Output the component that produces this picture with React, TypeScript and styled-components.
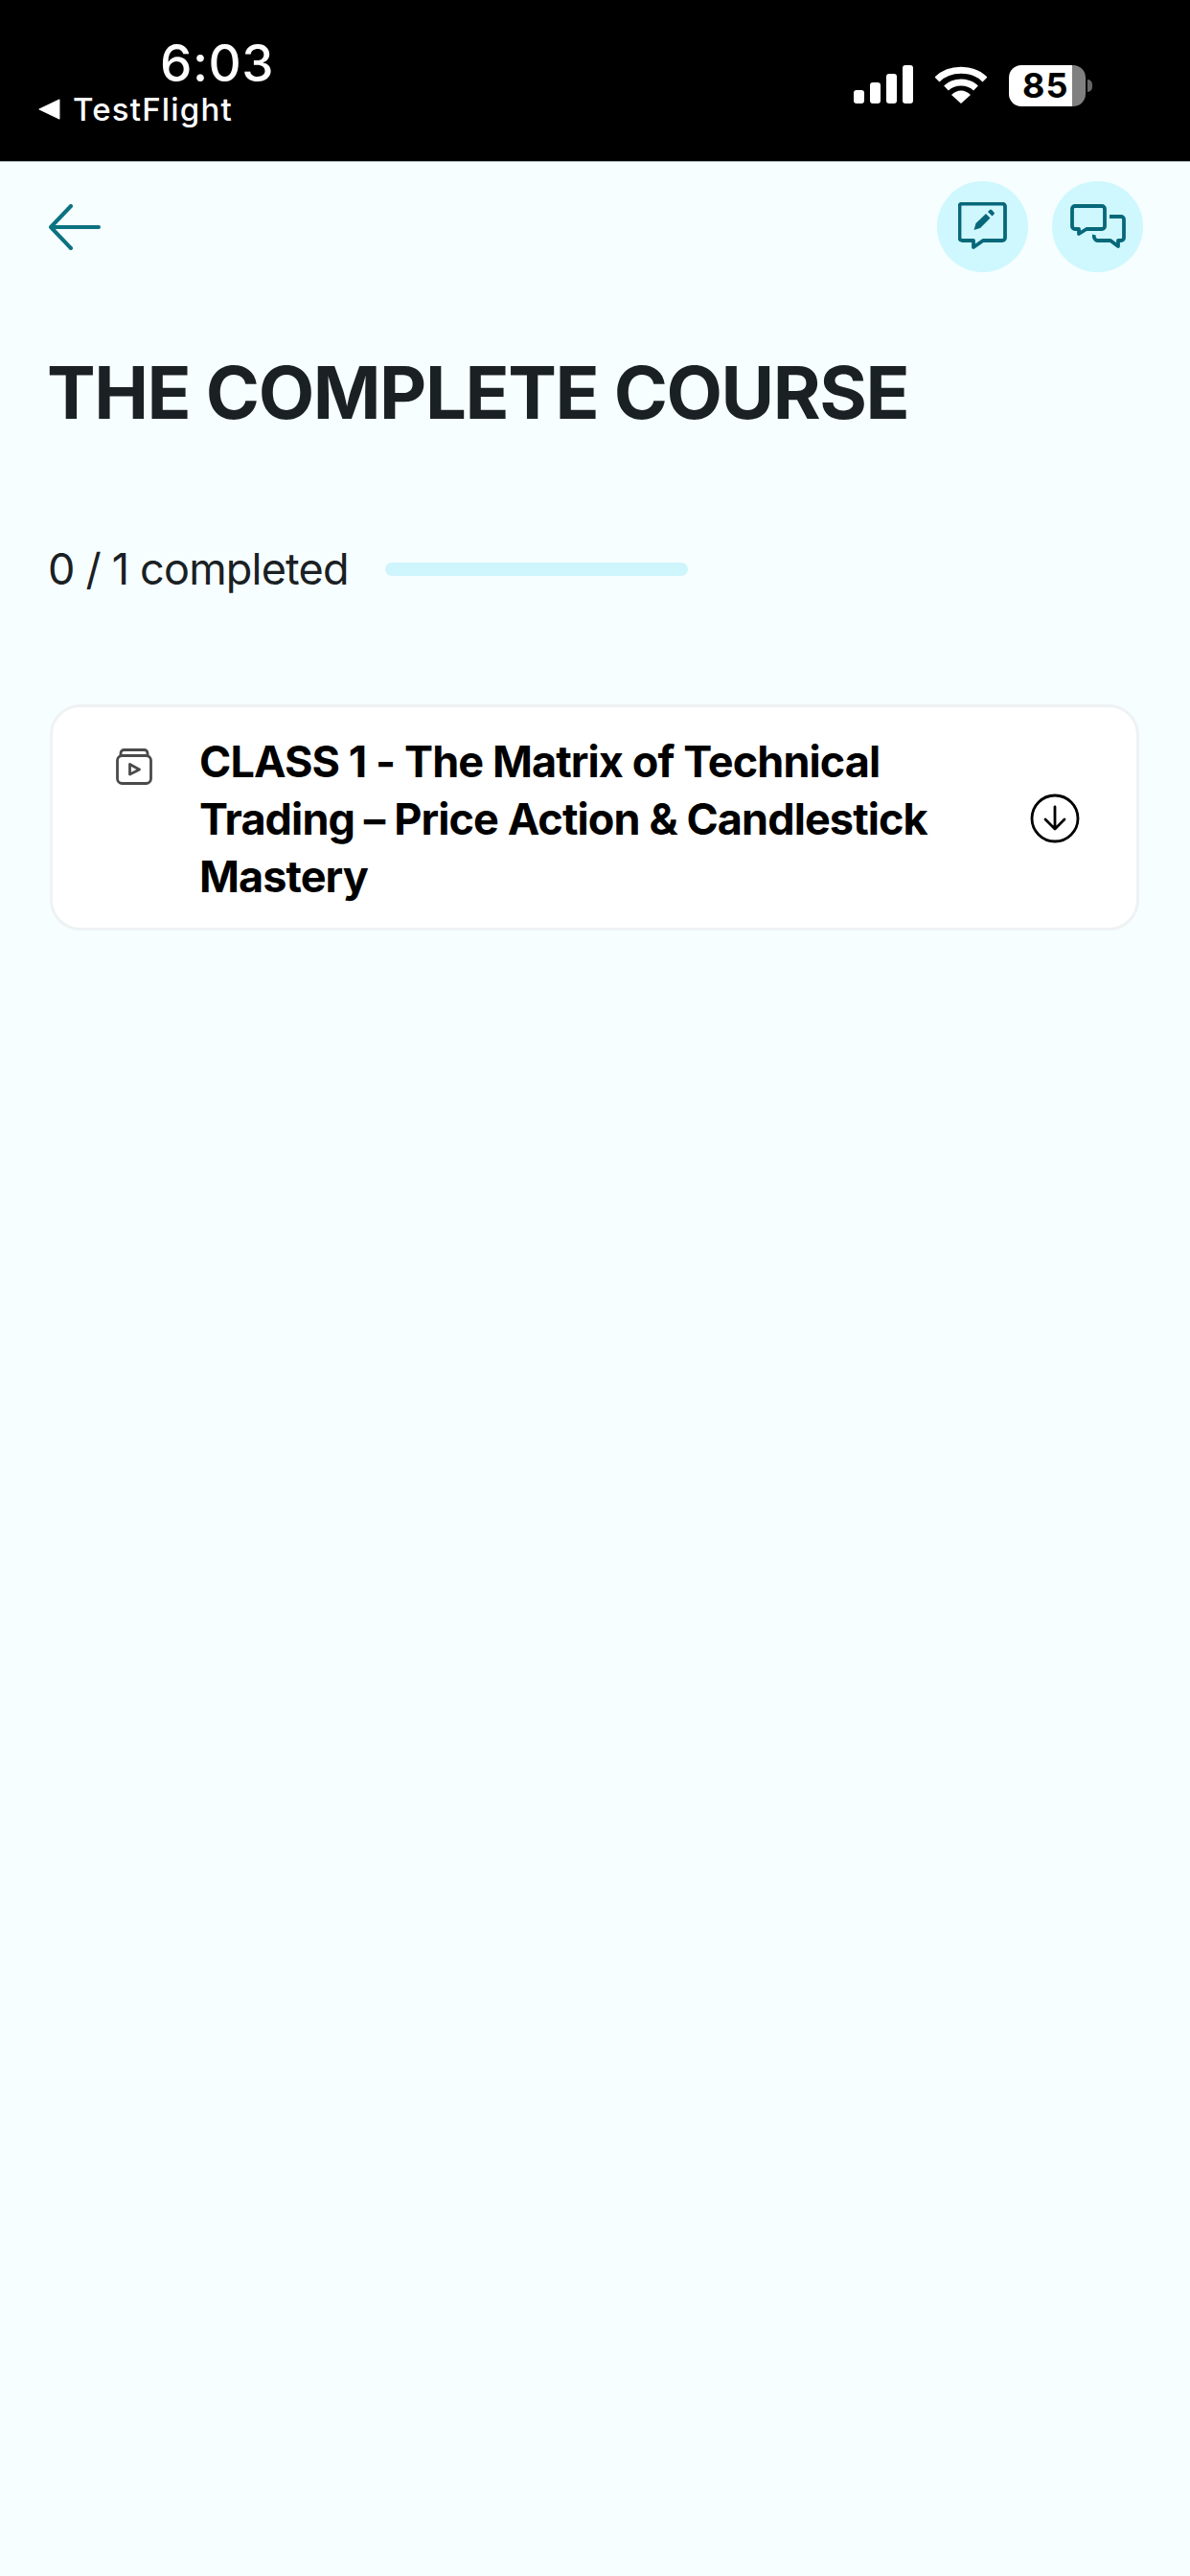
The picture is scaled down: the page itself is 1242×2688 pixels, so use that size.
import React from "react";
import styled, { createGlobalStyle } from "styled-components";

const Global = createGlobalStyle`
  html, body { margin: 0; padding: 0; background: #f6feff; }
  body { font-family: "Inter", "Liberation Sans", sans-serif; }
`;

const Page = styled.div`
  width: 1242px;
  height: 2688px;
  overflow: hidden;
  background: #f6feff;
  display: flex;
  flex-direction: column;
`;

const StatusBar = styled.header`
  height: 168px;
  background: #000;
  border-bottom: 1px solid #9fb4b8;
  box-sizing: content-box;
  display: flex;
  justify-content: space-between;
  color: #fff;
`;

const StatusLeft = styled.div`
  display: flex;
  flex-direction: column;
  padding: 38px 0 0 40px;
`;

const Time = styled.div`
  font-size: 53px;
  line-height: 56px;
  font-weight: 500;
  margin-left: 127px;
  letter-spacing: 0.5px;
`;

const Back = styled.div`
  display: flex;
  align-items: center;
  gap: 13px;
  font-size: 33px;
  line-height: 40px;
  font-weight: 500;
  letter-spacing: 1.2px;
`;

const StatusRight = styled.div`
  display: flex;
  align-items: flex-start;
  padding: 68px 109px 0 0;
  gap: 23px;
`;

const Battery = styled.div`
  position: relative;
  width: 80px;
  height: 43px;
  border-radius: 13px;
  background: linear-gradient(to right, #fff 0, #fff 83%, #808080 83%, #808080 100%);
  color: #000;
  font-size: 36px;
  font-weight: 700;
  line-height: 43px;
  padding-left: 14px;
  box-sizing: border-box;
  letter-spacing: 1px;
`;

const Nub = styled.span`
  position: absolute;
  right: -7px;
  top: 15px;
  width: 5px;
  height: 13px;
  background: #666;
  border-radius: 0 6px 6px 0;
`;

const Content = styled.main`
  display: flex;
  flex-direction: column;
  padding: 20px 51px 0 51px;
`;

const TopRow = styled.div`
  display: flex;
  align-items: center;
  justify-content: space-between;
  margin-right: -2px;
`;

const Actions = styled.div`
  display: flex;
  gap: 25px;
`;

const Round = styled.button`
  width: 95px;
  height: 95px;
  padding: 0;
  border: none;
  border-radius: 50%;
  background: #cff7fe;
  display: flex;
  align-items: center;
  justify-content: center;
`;

const Title = styled.h1`
  margin: 79px 0 0 -2px;
  font-size: 76px;
  line-height: 92px;
  font-weight: 700;
  color: #1a2023;
  letter-spacing: -1.45px;
`;

const ProgressRow = styled.div`
  display: flex;
  align-items: center;
  gap: 38px;
  margin: 111px 0 0 -1px;
`;

const ProgressText = styled.span`
  font-size: 45px;
  line-height: 56px;
  color: #1a2023;
  letter-spacing: -0.8px;
`;

const Track = styled.div`
  width: 316px;
  height: 14px;
  border-radius: 7px;
  background: #cff5fc;
`;

const Card = styled.section`
  margin-top: 113px;
  width: 1137px;
  height: 236px;
  margin-left: 1px;
  box-sizing: border-box;
  background: #fff;
  border: 3px solid #eff2f3;
  border-radius: 32px;
  display: flex;
  align-items: flex-start;
  padding: 27px 0 0 66px;
`;

const LessonIcon = styled.div`
  width: 38px;
  height: 38px;
  margin-top: 16px;
  flex: none;
`;

const LessonTitle = styled.div`
  width: 810px;
  margin-left: 49px;
  font-size: 45px;
  line-height: 60px;
  font-weight: 700;
  color: #000;
  letter-spacing: -0.9px;
`;

const Download = styled.div`
  width: 52px;
  height: 52px;
  margin: 63px 0 0 57px;
  flex: none;
`;

export default function App() {
  return (
    <Page>
      <Global />
      <StatusBar>
        <StatusLeft>
          <Time>6:03</Time>
          <Back>
            <svg width="23" height="24" viewBox="0 0 22 22">
              <path d="M21 1.5 V20.5 L1 11 Z" fill="#fff" stroke="#fff" strokeWidth="1" strokeLinejoin="round" />
            </svg>
            TestFlight
          </Back>
        </StatusLeft>
        <StatusRight>
          <svg width="62" height="40" viewBox="0 0 62 40" fill="#fff">
            <rect x="0" y="26" width="11" height="14" rx="3" />
            <rect x="17" y="18" width="11" height="22" rx="3" />
            <rect x="34" y="9" width="11" height="31" rx="3" />
            <rect x="51" y="0" width="11" height="40" rx="3" />
          </svg>
          <svg width="54" height="40" viewBox="0 0 54 40">
            <path d="M2 15 C15 2 39 2 52 15" fill="none" stroke="#fff" strokeWidth="7" />
            <path d="M11.5 24 C20 16 34 16 42.5 24" fill="none" stroke="#fff" strokeWidth="7" />
            <path d="M17 31 C23 25 31 25 37 31 L27 40 Z" fill="#fff" />
          </svg>
          <Battery>
            85
            <Nub />
          </Battery>
        </StatusRight>
      </StatusBar>
      <Content>
        <TopRow>
          <svg width="54" height="48" viewBox="0 0 54 48" fill="none" stroke="#0b7280" strokeWidth="4" strokeLinecap="round" strokeLinejoin="round">
            <path d="M52 24 H2 M23 2 L2 24 L23 46" />
          </svg>
          <Actions>
            <Round>
              <svg width="52" height="52" viewBox="0 0 52 52" fill="none">
                <path d="M4 1.5 H46 A3 3 0 0 1 49 4.5 V37 A3 3 0 0 1 46 40 H26 L16 47 V40 H4 A3 3 0 0 1 1.5 37 V4.5 A3 3 0 0 1 4 1.5 Z" stroke="#07687a" strokeWidth="3.8" strokeLinejoin="round" />
                <path d="M16.5 29 L18.5 22 L29 12 L33.5 16.5 L23 27 Z M31 10 L33 8 A1.5 1.5 0 0 1 35 8 L37.5 10.5 A1.5 1.5 0 0 1 37.5 12.5 L35.5 14.5 Z" fill="#07687a" />
              </svg>
            </Round>
            <Round>
              <svg width="58" height="48" viewBox="0 0 58 48" fill="none" stroke="#07687a" strokeWidth="3.8" strokeLinejoin="round">
                <path d="M5 2 H33 A3 3 0 0 1 36 5 V23 A3 3 0 0 1 33 26 H17 L9 31 V26 H5 A3 3 0 0 1 2 23 V5 A3 3 0 0 1 5 2 Z" />
                <path d="M41 13 H53 A3 3 0 0 1 56 16 V35 A3 3 0 0 1 53 38 H50 V44 L42 38 H28 A5 5 0 0 1 25 32" />
              </svg>
            </Round>
          </Actions>
        </TopRow>
        <Title>THE COMPLETE COURSE</Title>
        <ProgressRow>
          <ProgressText>0 / 1 completed</ProgressText>
          <Track />
        </ProgressRow>
        <Card>
          <LessonIcon>
            <svg width="38" height="38" viewBox="0 0 38 38" fill="none" stroke="#4a4a4a" strokeWidth="2.8" strokeLinejoin="round" strokeLinecap="round">
              <rect x="1.5" y="7.5" width="35" height="29" rx="5" />
              <path d="M5 7 V5 A3.5 3.5 0 0 1 8.5 1.5 H29.5 A3.5 3.5 0 0 1 33 5 V7" />
              <path d="M14.5 16.5 V27 L24.5 22 Z" />
            </svg>
          </LessonIcon>
          <LessonTitle>CLASS 1 - The Matrix of Technical Trading – Price Action &amp; Candlestick Mastery</LessonTitle>
          <Download>
            <svg width="52" height="52" viewBox="0 0 52 52" fill="none" stroke="#000" strokeWidth="2.8" strokeLinecap="round" strokeLinejoin="round">
              <circle cx="26" cy="26" r="24" />
              <path d="M26 14 V37 M16 27 L26 37 L36 27" />
            </svg>
          </Download>
        </Card>
      </Content>
    </Page>
  );
}
